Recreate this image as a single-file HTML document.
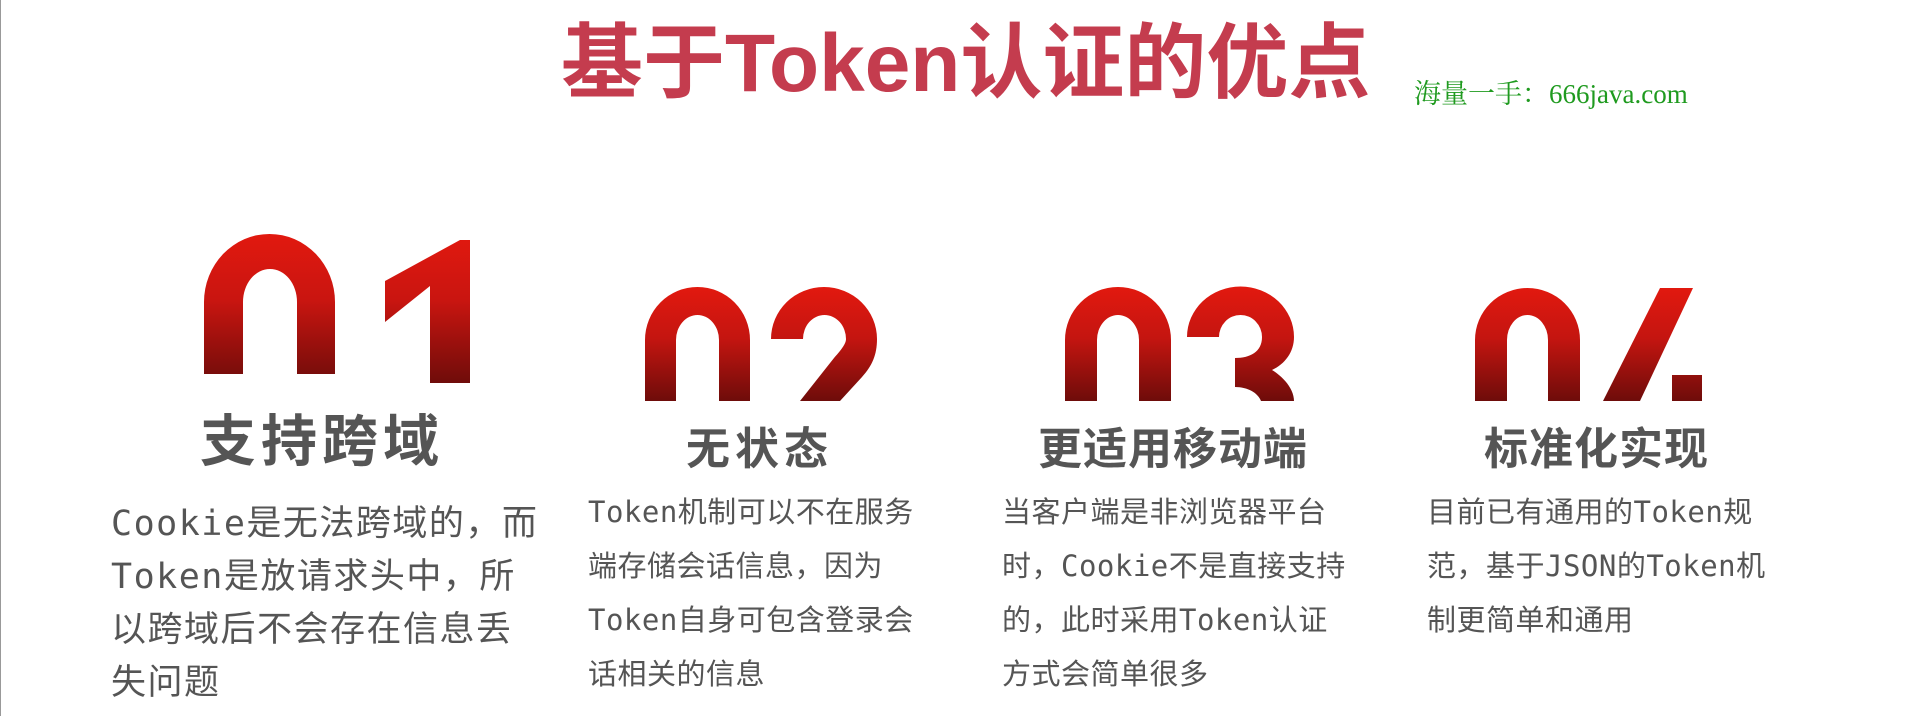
<!DOCTYPE html>
<html><head><meta charset="utf-8"><style>
html,body{margin:0;padding:0;background:#fff;width:1920px;height:716px;overflow:hidden;position:relative}
.l{position:absolute;left:0;top:0;width:1px;height:716px;background:#999}
.t{position:absolute;white-space:nowrap;line-height:1}
.title{left:561px;top:-4px;font:bold 82px "Liberation Sans","Noto Sans CJK SC",sans-serif;color:#c43c4e}
.g{left:1414px;top:72px;font:27px "Liberation Serif","Noto Serif CJK SC",serif;color:#1f9a1f}
.h{font-family:"Liberation Sans","Noto Sans CJK SC",sans-serif;font-weight:bold;color:#555}
.b{position:absolute;font-family:"DejaVu Sans Mono","Noto Sans CJK SC",monospace;color:#555;white-space:nowrap}
svg{position:absolute;left:0;top:0}
</style></head><body>
<div class="l"></div>
<svg width="1920" height="716">
<defs>
<linearGradient id="a" x1="0" y1="232" x2="0" y2="384" gradientUnits="userSpaceOnUse"><stop offset="0" stop-color="#e2190f"/><stop offset=".45" stop-color="#c91510"/><stop offset="1" stop-color="#6e0c0a"/></linearGradient>
<linearGradient id="c" x1="0" y1="287" x2="0" y2="401" gradientUnits="userSpaceOnUse"><stop offset="0" stop-color="#e2190f"/><stop offset=".45" stop-color="#c41510"/><stop offset="1" stop-color="#6e0c0a"/></linearGradient>
</defs>
<g fill="url(#a)">
<path d="M204 374V302A65.5 68 0 0 1 335 302V374H297V302A27 33 0 0 0 243 302V374Z"/>
<path d="M385 281L460 240H470V383H430V286L385 322Z"/>
</g>
<g fill="url(#c)">
<path d="M645 401V340A52.5 53 0 0 1 750 340V401H719V340A21.5 25 0 0 0 676 340V401Z"/>
<path d="M771 339A53 52 0 0 1 877 339C877 355 872 366 862 377L840 401H800L834 358C843 348 846 343 846 339A21.5 24 0 0 0 803 339Z"/>
<path d="M1065 401V340A53 53 0 0 1 1171 340V401H1139V340A21 25 0 0 0 1097 340V401Z"/>
<path d="M1187 337A53 50 0 0 1 1294 337C1294 352 1285 364 1272 370C1285 378 1294 390 1294 401H1261C1258 393 1248 387 1235 387V358C1250 358 1262 352 1262 337A21.5 22 0 0 0 1219 337Z"/>
<path d="M1475 401V340A52.5 52 0 0 1 1580 340V401H1548V340A20.5 25 0 0 0 1507 340V401Z"/>
<path d="M1660 288H1693L1640 401H1603Z"/>
<rect x="1672" y="375" width="30" height="26"/>
</g>
</svg>
<div class="t title">基于Token认证的优点</div>
<div class="t g">海量一手：666java.com</div>
<div class="t h" style="left:200px;top:414px;font-size:56px;letter-spacing:5px">支持跨域</div>
<div class="t h" style="left:686px;top:428px;font-size:44px;letter-spacing:5px">无状态</div>
<div class="t h" style="left:1038px;top:428px;font-size:44px;letter-spacing:1px">更适用移动端</div>
<div class="t h" style="left:1484px;top:428px;font-size:44px;letter-spacing:1px">标准化实现</div>
<div class="b" style="left:111px;top:498px;font-size:35px;line-height:53px;letter-spacing:1.5px">Cookie是无法跨域的，而<br>Token是放请求头中，所<br>以跨域后不会存在信息丢<br>失问题</div>
<div class="b" style="left:588px;top:485px;font-size:29px;line-height:54px;letter-spacing:0.5px">Token机制可以不在服务<br>端存储会话信息，因为<br>Token自身可包含登录会<br>话相关的信息</div>
<div class="b" style="left:1002px;top:485px;font-size:29px;line-height:54px;letter-spacing:0.5px">当客户端是非浏览器平台<br>时，Cookie不是直接支持<br>的，此时采用Token认证<br>方式会简单很多</div>
<div class="b" style="left:1427px;top:485px;font-size:29px;line-height:54px;letter-spacing:0.5px">目前已有通用的Token规<br>范，基于JSON的Token机<br>制更简单和通用</div>
</body></html>
